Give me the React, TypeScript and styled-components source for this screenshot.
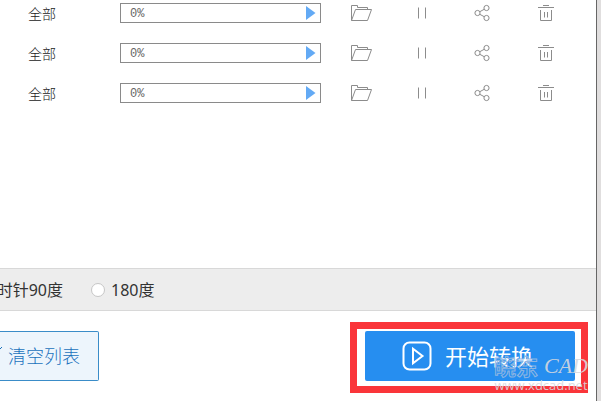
import React, { useState } from "react";
import styled, { createGlobalStyle } from "styled-components";

const GlobalStyle = createGlobalStyle`
  *, *::before, *::after { box-sizing: border-box; }
  body {
    margin: 0;
    background: #fff;
    font-family: "Noto Sans", "Noto Sans CJK SC", sans-serif;
    color: #333;
  }
  button { font: inherit; cursor: pointer; }
`;

const Window = styled.div`
  display: flex;
  flex-direction: column;
  min-height: 100vh;
  overflow: hidden;
  border-right: 4px solid #e0dede;
`;

const Content = styled.div`
  display: flex;
  flex: 1;
  flex-direction: column;
  border-right: 1px solid #666;
`;

const ListPane = styled.main`
  flex: 1;
  overflow: hidden;
`;

const FileTable = styled.table`
  width: 100%;
  margin-top: -7px;
  table-layout: fixed;
  border-collapse: collapse;
`;

const Col = styled.col<{ $width?: number }>`
  width: ${(p) => (p.$width ? `${p.$width}px` : "auto")};
`;

const Cell = styled.td`
  height: 40px;
  padding: 0;
  vertical-align: middle;
`;

const Pages = styled.div`
  padding: 2px 0 0 28px;
  color: #222;
  font-size: 14px;
  font-weight: 300;
  line-height: 20px;
`;

const Progress = styled.div`
  display: flex;
  align-items: center;
  justify-content: space-between;
  height: 20px;
  padding: 0 4px 0 9px;
  border: 1px solid #8a8a8a;
  background: #fff;
  color: #666;
  font-family: "Liberation Mono", monospace;
  font-size: 12px;
  line-height: 16px;
`;

const Percent = styled.span`
  padding-top: 2px;
`;

const IconButton = styled.button`
  display: flex;
  margin: 0 auto;
  padding: 0;
  border: 0;
  background: none;
  color: #8c8c8c;

  svg { display: block; }
`;

const PlayButton = styled(IconButton)`
  margin: 0;
`;

const OptionBar = styled.div`
  display: flex;
  align-items: center;
  gap: 28px;
  height: 43px;
  border-top: 1px solid #d8d8d8;
  border-bottom: 1px solid #d8d8d8;
  background: #ededed;
`;

const Option = styled.label<{ $cut?: boolean }>`
  display: flex;
  align-items: center;
  justify-content: flex-end;
  gap: 6px;
  width: ${(p) => (p.$cut ? "63px" : "auto")};
  font-size: 16px;
  line-height: 24px;
  white-space: nowrap;
`;

const Radio = styled.input`
  appearance: none;
  flex: none;
  width: 14px;
  height: 14px;
  margin: 0;
  border: 1px solid #c6c6c6;
  border-radius: 50%;
  background: #fff;

  &:checked { border: 4px solid #268ef0; }
`;

const Footer = styled.footer`
  display: flex;
  align-items: flex-start;
  justify-content: space-between;
  height: 90px;
  padding: 11px 8px 0 0;
`;

const ClearButton = styled.button`
  display: flex;
  align-items: center;
  gap: 6px;
  height: 50px;
  margin-top: 9px;
  padding: 0 18px 0 0;
  border: 1px solid #3a8cc8;
  border-left: 0;
  border-radius: 0 2px 2px 0;
  background: #edf5fc;
  color: #1a72bc;
  font-size: 18px;
  font-weight: 300;
  line-height: 24px;

  svg { display: block; }
`;

const Highlight = styled.div`
  position: relative;
  padding: 2px 6px 5px 8px;
  border: 7px solid #fa353a;
`;

const StartButton = styled.button`
  display: flex;
  align-items: center;
  justify-content: center;
  gap: 13px;
  width: 210px;
  height: 50px;
  padding: 0 5px 0 0;
  border: 0;
  border-radius: 2px;
  background: #268ef0;
  color: #fff;
  font-size: 22px;
  line-height: 30px;

  svg { display: block; }
`;

const Watermark = styled.div`
  position: absolute;
  right: -7px;
  bottom: -7px;
  width: 94px;
  color: rgba(215, 217, 222, 0.9);
  pointer-events: none;
`;

const Brand = styled.div`
  display: flex;
  align-items: center;
  justify-content: space-between;
  height: 22px;
`;

const BrandName = styled.span`
  color: transparent;
  font-size: 22px;
  font-weight: 700;
  line-height: 22px;
  white-space: nowrap;
  -webkit-text-stroke: 1px #8fb6e2;
`;

const BrandSuffix = styled.span`
  font-family: "Liberation Serif", serif;
  font-size: 22px;
  font-style: italic;
  line-height: 22px;
`;

const Site = styled.div`
  font-family: "Open Sans", sans-serif;
  font-size: 13px;
  line-height: 16px;
  text-align: center;
  white-space: nowrap;
`;

const PlayIcon = () => (
  <svg width="11" height="14" viewBox="0 0 11 14" aria-hidden="true">
    <path d="M1 0 10.5 7 1 14Z" fill="#63aaf5" />
  </svg>
);

const FolderIcon = () => (
  <svg width="22" height="18" viewBox="0 0 22 18" fill="none" stroke="currentColor" aria-hidden="true">
    <path d="M1.5 16.5V1.5H7.5V3.5H17.5V5.5M1.5 16.5 5.5 5.5H21.5L17.5 16.5Z" />
  </svg>
);

const PauseIcon = () => (
  <svg width="10" height="12" viewBox="0 0 10 12" fill="none" stroke="currentColor" aria-hidden="true">
    <path d="M1.5 .5V11.5M8.5 .5V11.5" />
  </svg>
);

const ShareIcon = () => (
  <svg width="16" height="18" viewBox="0 0 16 18" fill="none" stroke="currentColor" aria-hidden="true">
    <circle cx="3.5" cy="9" r="2.6" />
    <circle cx="12.5" cy="4" r="2.6" />
    <circle cx="12.5" cy="14" r="2.6" />
    <path d="M5.8 7.7 10.2 5.3M5.8 10.3 10.2 12.7" />
  </svg>
);

const TrashIcon = () => (
  <svg width="16" height="18" viewBox="0 0 16 18" fill="none" stroke="currentColor" aria-hidden="true">
    <path d="M5 1.5H11M0 3.5H16M2.5 6V16.5H13.5V6M6.5 8V13.5M9.5 8V13.5" />
  </svg>
);

const StartIcon = () => (
  <svg width="30" height="30" viewBox="0 0 30 30" fill="none" stroke="currentColor" strokeWidth="2" aria-hidden="true">
    <rect x="1.5" y="1.5" width="27" height="27" rx="6" />
    <path d="M11 7.8V22.2L20.5 15Z" />
  </svg>
);

const BroomTip = () => (
  <svg width="2" height="20" viewBox="0 0 2 20" stroke="currentColor" aria-hidden="true">
    <path d="M0 3 2 1" />
  </svg>
);

const files = [
  { id: 1, pages: "全部", percent: 0 },
  { id: 2, pages: "全部", percent: 0 },
  { id: 3, pages: "全部", percent: 0 },
];

const actions = [
  { label: "打开文件夹", Icon: FolderIcon },
  { label: "暂停", Icon: PauseIcon },
  { label: "分享", Icon: ShareIcon },
  { label: "删除", Icon: TrashIcon },
];

export default function App() {
  const [rotation, setRotation] = useState("");

  return (
    <Window>
      <GlobalStyle />
      <Content>
        <ListPane>
          <FileTable>
            <colgroup>
              <Col $width={120} />
              <Col />
              <Col $width={80} />
              <Col $width={42} />
              <Col $width={78} />
              <Col $width={50} />
              <Col $width={25} />
            </colgroup>
            <tbody>
              {files.map((file) => (
                <tr key={file.id}>
                  <Cell>
                    <Pages>{file.pages}</Pages>
                  </Cell>
                  <Cell>
                    <Progress>
                      <Percent>{file.percent}%</Percent>
                      <PlayButton type="button" aria-label="开始">
                        <PlayIcon />
                      </PlayButton>
                    </Progress>
                  </Cell>
                  {actions.map(({ label, Icon }) => (
                    <Cell key={label}>
                      <IconButton type="button" aria-label={label}>
                        <Icon />
                      </IconButton>
                    </Cell>
                  ))}
                  <Cell />
                </tr>
              ))}
            </tbody>
          </FileTable>
        </ListPane>
        <OptionBar>
          <Option $cut>时针90度</Option>
          <Option>
            <Radio
              type="radio"
              name="rotation"
              value="180"
              checked={rotation === "180"}
              onChange={(e) => setRotation(e.target.value)}
            />
            180度
          </Option>
        </OptionBar>
        <Footer>
          <ClearButton type="button">
            <BroomTip />
            清空列表
          </ClearButton>
          <Highlight>
            <StartButton type="button">
              <StartIcon />
              开始转换
            </StartButton>
            <Watermark>
              <Brand>
                <BrandName>晓东</BrandName>
                <BrandSuffix>CAD</BrandSuffix>
              </Brand>
              <Site>www.xdcad.net</Site>
            </Watermark>
          </Highlight>
        </Footer>
      </Content>
    </Window>
  );
}
